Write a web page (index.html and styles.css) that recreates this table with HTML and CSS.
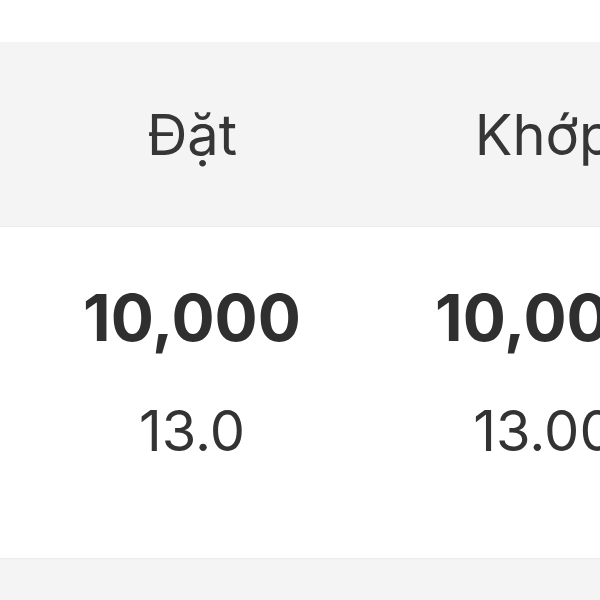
FILE: index.html
```html
<!DOCTYPE html>
<html lang="vi">
<head>
<meta charset="utf-8">
<link rel="stylesheet" href="styles.css">
</head>
<body>
  <div class="table">
    <div class="row head">
      <div class="cell">Đặt</div>
      <div class="cell">Khớp</div>
    </div>
    <div class="row body">
      <div class="cell">
        <div class="qty">10,000</div>
        <div class="price">13.0</div>
      </div>
      <div class="cell">
        <div class="qty">10,000</div>
        <div class="price">13.00</div>
      </div>
    </div>
    <div class="row foot"></div>
  </div>
</body>
</html>
```
FILE: styles.css
```css
html, body {
  margin: 0;
  padding: 0;
  background: #ffffff;
}
body {
  font-family: Inter, "Open Sans", "Liberation Sans", sans-serif;
  color: #333333;
  width: 600px;
  height: 600px;
  overflow: hidden;
}
.table {
  padding-top: 42px;
  display: flex;
  flex-direction: column;
}
.row {
  display: grid;
  grid-template-columns: 352px 352px;
  padding-left: 16px;
  white-space: nowrap;
}
.head {
  background: #f4f4f4;
  height: 185px;
  align-items: center;
  border-bottom: 1px solid #ececec;
  box-sizing: border-box;
}
.head .cell {
  text-align: center;
  font-size: 56px;
  line-height: 56px;
  font-weight: 400;
  color: #363636;
  padding-top: 2px;
}
.body {
  height: 331px;
  padding-top: 59px;
  box-sizing: border-box;
}
.body .cell {
  display: flex;
  flex-direction: column;
  align-items: center;
}
.qty {
  font-size: 64px;
  line-height: 64px;
  font-weight: 700;
  color: #2f2f2f;
}
.price {
  margin-top: 53px;
  font-size: 56px;
  line-height: 56px;
  font-weight: 400;
  color: #333333;
}
.foot {
  background: #f4f4f4;
  height: 42px;
  border-top: 1px solid #ececec;
}
```
